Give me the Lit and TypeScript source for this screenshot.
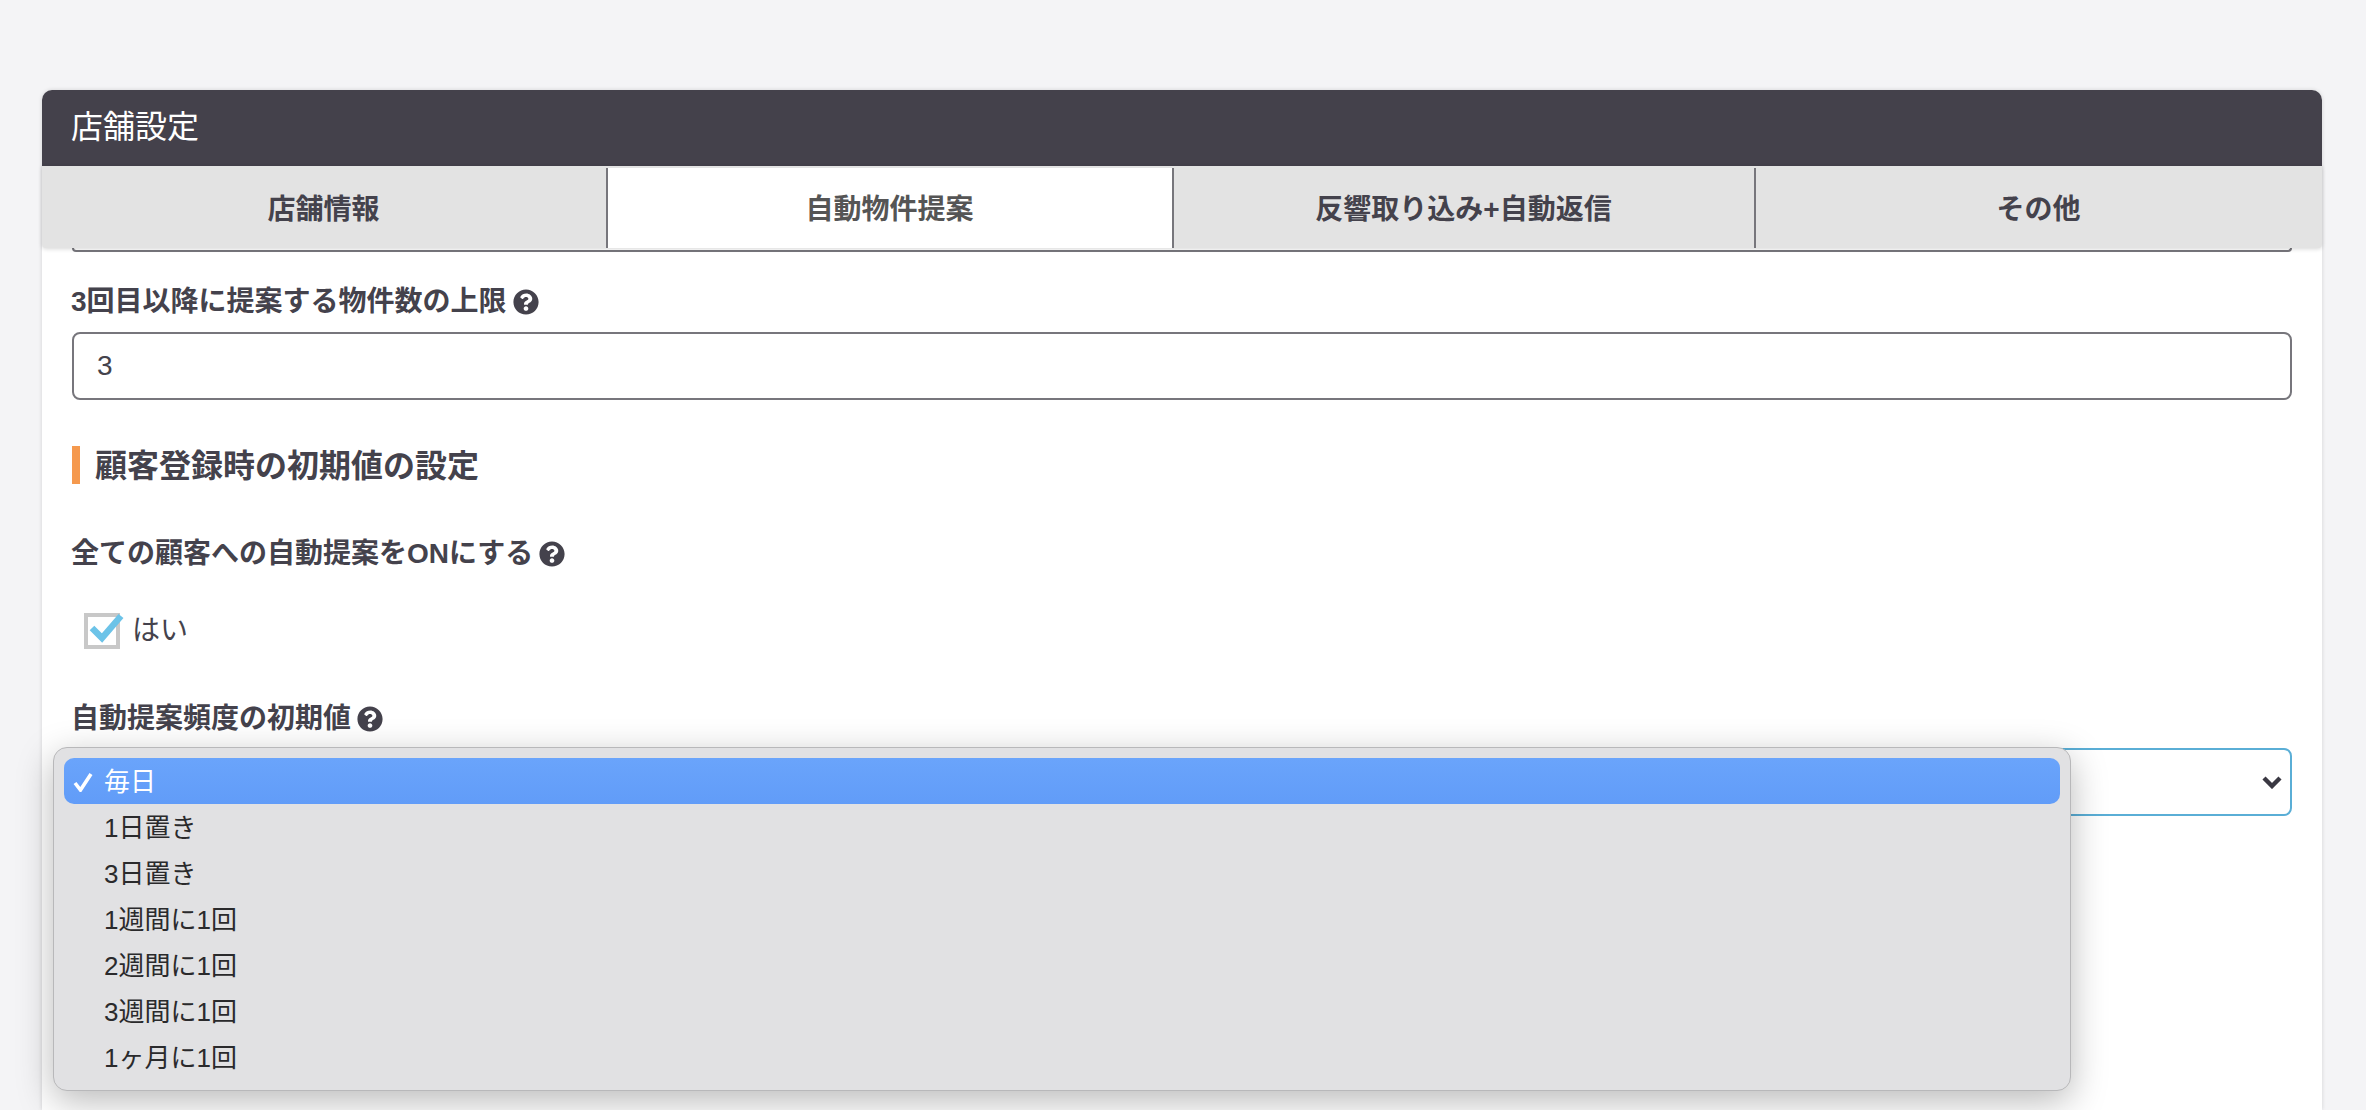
import { LitElement, html, css, svg } from "lit";
import { customElement } from "lit/decorators.js";

const HELP = svg`<path d="M504 256c0 136.997-111.043 248-248 248S8 392.997 8 256C8 119.083 119.043 8 256 8s248 111.083 248 248zM262.655 90c-54.497 0-89.255 22.957-116.549 63.758-3.536 5.286-2.353 12.415 2.715 16.258l34.699 26.31c5.205 3.947 12.621 3.008 16.665-2.122 17.864-22.658 30.113-35.797 57.303-35.797 20.429 0 45.698 13.148 45.698 32.958 0 14.976-12.363 22.667-32.534 33.976C247.128 238.528 216 254.941 216 296v4c0 6.627 5.373 12 12 12h56c6.627 0 12-5.373 12-12v-1.333c0-28.462 83.186-29.647 83.186-106.667 0-58.002-60.165-102-116.531-102zM256 338c-25.365 0-46 20.635-46 46 0 25.364 20.635 46 46 46s46-20.636 46-46c0-25.365-20.635-46-46-46z"/>`;

const TABS = ["店舗情報", "自動物件提案", "反響取り込み+自動返信", "その他"];
const OPTIONS = ["毎日", "1日置き", "3日置き", "1週間に1回", "2週間に1回", "3週間に1回", "1ヶ月に1回"];

@customElement("app-root")
export class AppRoot extends LitElement {
  static styles = css`
    :host {
      display: block;
      height: 1110px;
      overflow: hidden;
      box-sizing: border-box;
      padding: 90px 44px 0 42px;
      background: #f4f4f6;
      color: #44424c;
      font-family: "Liberation Sans", "Noto Sans CJK JP", sans-serif;
    }
    .card {
      height: 1020px;
      background: #fff;
      border-radius: 10px 10px 0 0;
      box-shadow: 0 0 4px rgba(0, 0, 0, 0.14);
      display: flex;
      flex-direction: column;
    }
    .head {
      height: 76px;
      flex: none;
      box-sizing: border-box;
      padding: 0 0 9px 29px;
      display: flex;
      align-items: center;
      background: #44414b;
      color: #fff;
      font-size: 32px;
      border-radius: 10px 10px 0 0;
    }
    .tabs {
      flex: none;
      position: relative;
      z-index: 1;
      height: 82px;
      box-sizing: border-box;
      padding-top: 2px;
      display: grid;
      grid-template-columns: 564px 566px 582px 1fr;
      background: #e3e3e3;
      border-radius: 0 0 4px 4px;
      box-shadow: 0 1px 4px rgba(0, 0, 0, 0.16);
    }
    .tab {
      display: flex;
      align-items: center;
      justify-content: center;
      padding: 0 1px 3px 0;
      font-size: 28px;
      font-weight: 700;
    }
    .tab + .tab {
      border-left: 2px solid #77767c;
    }
    .tab.on {
      background: #fff;
      color: #555;
    }
    .body {
      flex: 1;
      padding: 0 30px;
      display: flex;
      flex-direction: column;
    }
    .clipped {
      height: 4px;
      box-sizing: border-box;
      border: 2px solid #77767c;
      border-top: 0;
      border-radius: 0 0 8px 8px;
    }
    .label {
      height: 40px;
      display: flex;
      align-items: center;
      gap: 6px;
      margin-left: -1px;
      font-size: 28px;
      font-weight: 700;
      line-height: 40px;
    }
    .help {
      width: 26px;
      height: 26px;
      fill: #44424c;
      flex: none;
    }
    .l1 { margin-top: 30px; }
    .l2 { margin-top: 50px; }
    .l3 { margin-top: 50px; }
    .input {
      margin-top: 10px;
      height: 68px;
      box-sizing: border-box;
      border: 2px solid #77767c;
      border-radius: 8px;
      padding-left: 23px;
      display: flex;
      align-items: center;
      font-size: 28px;
    }
    .section {
      margin-top: 46px;
      height: 38px;
      border-left: 8px solid #f5994e;
      padding-left: 15px;
      font-size: 32px;
      font-weight: 700;
      line-height: 41px;
    }
    .check {
      margin-top: 39px;
      margin-left: 12px;
      height: 36px;
      display: flex;
      align-items: center;
      gap: 12px;
      font-size: 28px;
      line-height: 32px;
    }
    .box {
      position: relative;
      width: 36px;
      height: 36px;
      box-sizing: border-box;
      border: 4px solid #c8c8c8;
      flex: none;
    }
    .tick {
      position: absolute;
      left: -4px;
      top: -4px;
      width: 44px;
      height: 36px;
      overflow: visible;
      fill: none;
      stroke: #6cc3e8;
      stroke-width: 6.5;
    }
    .select {
      position: relative;
      margin-top: 9px;
      height: 68px;
      box-sizing: border-box;
      border: 2px solid #5aaed6;
      border-radius: 8px;
    }
    .chevron {
      position: absolute;
      right: 8px;
      top: 25px;
      width: 20px;
      height: 14px;
      fill: none;
      stroke: #3a3842;
      stroke-width: 4.4;
    }
    .menu {
      position: absolute;
      left: -21px;
      top: -3px;
      width: 2018px;
      height: 344px;
      box-sizing: border-box;
      padding: 10px;
      background: #e1e1e3;
      border: 1px solid #b8b8ba;
      border-radius: 14px;
      box-shadow: 0 10px 36px rgba(0, 0, 0, 0.28);
      color: #2a2a2c;
      font-size: 26px;
      z-index: 2;
    }
    .opt {
      position: relative;
      height: 46px;
      line-height: 49px;
      padding-left: 40px;
    }
    .opt.on {
      background: linear-gradient(#6aa4fb, #619cf8);
      color: #fff;
      border-radius: 10px;
    }
    .mark {
      position: absolute;
      left: 9px;
      top: 14px;
      width: 21px;
      height: 20px;
      fill: none;
      stroke: #fff;
      stroke-width: 3.6;
    }
  `;

  private help() {
    return html`<svg class="help" viewBox="0 0 512 512">${HELP}</svg>`;
  }

  render() {
    return html`
      <div class="card">
        <div class="head">店舗設定</div>
        <div class="tabs">
          ${TABS.map((t, i) => html`<div class="tab ${i === 1 ? "on" : ""}">${t}</div>`)}
        </div>
        <div class="body">
          <div class="clipped"></div>
          <div class="label l1">3回目以降に提案する物件数の上限 ${this.help()}</div>
          <div class="input">3</div>
          <div class="section">顧客登録時の初期値の設定</div>
          <div class="label l2">全ての顧客への自動提案をONにする ${this.help()}</div>
          <div class="check">
            <div class="box">
              <svg class="tick" viewBox="0 0 44 36"><path d="M8 15 L18 25 L37 3"/></svg>
            </div>
            <span>はい</span>
          </div>
          <div class="label l3">自動提案頻度の初期値 ${this.help()}</div>
          <div class="select">
            <svg class="chevron" viewBox="0 0 20 14"><path d="M2 3 L10 11 L18 3"/></svg>
            <div class="menu">
              ${OPTIONS.map(
                (o, i) => html`<div class="opt ${i === 0 ? "on" : ""}">
                  ${i === 0 ? html`<svg class="mark" viewBox="0 0 21 20"><path d="M2 11 L7.5 18 L18 2"/></svg>` : ""}${o}
                </div>`
              )}
            </div>
          </div>
        </div>
      </div>
    `;
  }
}
